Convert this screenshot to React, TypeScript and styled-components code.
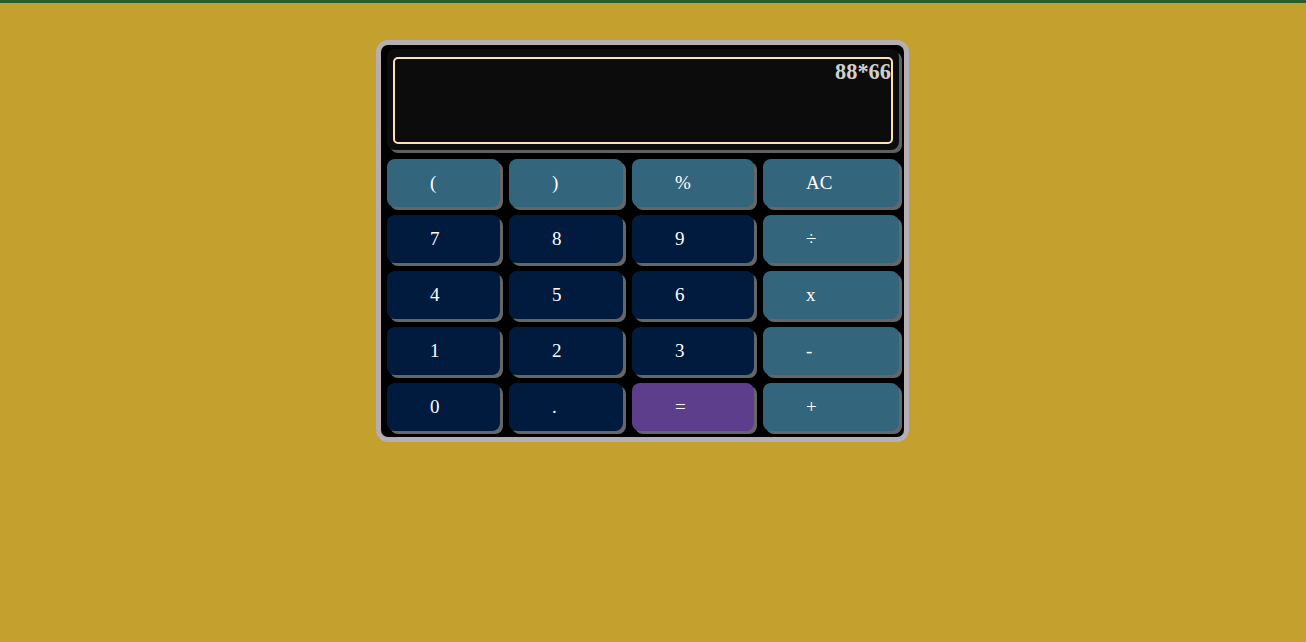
import React from "react";
import styled, { createGlobalStyle } from "styled-components";

const Global = createGlobalStyle`
  html, body {
    margin: 0;
    padding: 0;
    background: #c4a02e;
    font-family: "Liberation Serif", "Times New Roman", serif;
  }
  body {
    min-height: 642px;
    border-top: 3px solid #2a5d2e;
  }
`;

const Page = styled.div`
  padding-top: 37px;
  padding-left: calc(50% - 277px);
`;

const Calculator = styled.div`
  border: 5px solid #b5afb4;
  border-radius: 12px;
  background: #000;
  padding: 4px 5px 6px 6px;
  box-sizing: content-box;
  width: 512px;
`;

const DisplayBox = styled.div`
  background: #0c0c0c;
  border-radius: 8px;
  box-shadow: 3px 3px 0 #5f5f5f;
  padding: 8px 6px 6px 6px;
  margin-bottom: 9px;
`;

const Screen = styled.div`
  height: 83px;
  border: 2px solid #ffe0b4;
  border-radius: 5px;
  background: #0c0c0c;
  color: #cfcfcf;
  font-family: "Liberation Serif", "Times New Roman", serif;
  font-weight: bold;
  font-size: 22.4px;
  line-height: 26px;
  text-align: right;
`;

const Keys = styled.div`
  display: grid;
  grid-template-columns: 113px 114px 122px 136px;
  grid-auto-rows: 48px;
  column-gap: 9px;
  row-gap: 8px;
`;

type Kind = "op" | "num" | "eq";

const colors: Record<Kind, string> = {
  op: "#33657c",
  num: "#011b3f",
  eq: "#5d3e8c",
};

const Key = styled.button<{ $kind: Kind }>`
  appearance: none;
  border: none;
  margin: 0;
  padding: 0 0 0 43px;
  text-align: left;
  background: ${(p) => colors[p.$kind]};
  color: #fff;
  font-family: "Liberation Serif", "Times New Roman", serif;
  font-size: 19px;
  border-radius: 8px;
  box-shadow: 3px 3px 0 #666666;
  cursor: pointer;
`;

const keys: { label: string; kind: Kind }[] = [
  { label: "(", kind: "op" },
  { label: ")", kind: "op" },
  { label: "%", kind: "op" },
  { label: "AC", kind: "op" },
  { label: "7", kind: "num" },
  { label: "8", kind: "num" },
  { label: "9", kind: "num" },
  { label: "÷", kind: "op" },
  { label: "4", kind: "num" },
  { label: "5", kind: "num" },
  { label: "6", kind: "num" },
  { label: "x", kind: "op" },
  { label: "1", kind: "num" },
  { label: "2", kind: "num" },
  { label: "3", kind: "num" },
  { label: "-", kind: "op" },
  { label: "0", kind: "num" },
  { label: ".", kind: "num" },
  { label: "=", kind: "eq" },
  { label: "+", kind: "op" },
];

export default function App() {
  return (
    <>
      <Global />
      <Page>
        <Calculator>
          <DisplayBox>
            <Screen>88*66</Screen>
          </DisplayBox>
          <Keys>
            {keys.map((k) => (
              <Key key={k.label} $kind={k.kind}>
                {k.label}
              </Key>
            ))}
          </Keys>
        </Calculator>
      </Page>
    </>
  );
}
